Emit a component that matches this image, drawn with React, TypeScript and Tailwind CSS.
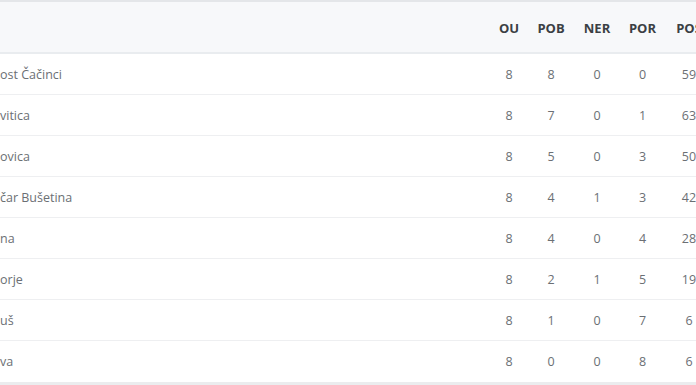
const rows: [string, number, number, number, number, number][] = [
  ["ost Čačinci", 8, 8, 0, 0, 59],
  ["vitica", 8, 7, 0, 1, 63],
  ["ovica", 8, 5, 0, 3, 50],
  ["čar Bušetina", 8, 4, 1, 3, 42],
  ["na", 8, 4, 0, 4, 28],
  ["orje", 8, 2, 1, 5, 19],
  ["uš", 8, 1, 0, 7, 6],
  ["va", 8, 0, 0, 8, 6],
];

const cols = ["OU", "POB", "NER", "POR", "POS"];
const widths = ["w-[38px]", "w-[46px]", "w-[46px]", "w-[45px]", "w-[48px]"];

export default function App() {
  return (
    <div className="h-[385px] w-[696px] overflow-hidden bg-white font-['Open_Sans',sans-serif]">
      <div className="w-[713px] border-t-2 border-[#e4e6e9]">
        <div className="flex h-[52px] items-center border-b-2 border-[#e9ecef] bg-[#f7f8fa] pt-[3px] text-[13px] font-bold text-[#3b3f44]">
          <div className="flex-1" />
          {cols.map((c, i) => (
            <div key={c} className={`${widths[i]} text-center`}>
              {c}
            </div>
          ))}
        </div>
        {rows.map((r, idx) => (
          <div
            key={r[0]}
            className={`flex h-[41px] items-center pt-[2px] text-[12.5px] text-[#6b6f74] ${
              idx < rows.length - 1 ? "border-b border-[#eeeff1]" : ""
            }`}
          >
            <div className="flex-1">{r[0]}</div>
            {r.slice(1).map((v, i) => (
              <div key={i} className={`${widths[i]} text-center`}>
                {v}
              </div>
            ))}
          </div>
        ))}
        <div className="h-[4px] bg-[#ebecee]" />
      </div>
    </div>
  );
}
